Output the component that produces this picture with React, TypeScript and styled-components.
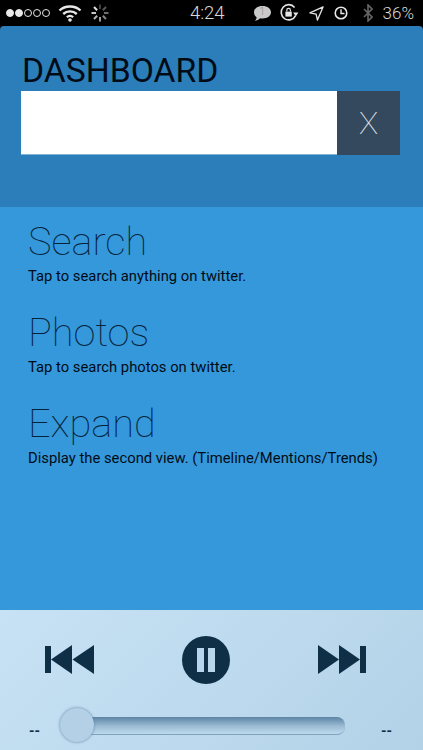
import React from 'react';
import styled, {createGlobalStyle} from 'styled-components';

const GlobalStyle = createGlobalStyle`
    html, body {
        margin: 0;
        padding: 0;
        background: #000;
    }

    * {
        box-sizing: border-box;
    }
`

const sections = [
    {title: 'Search', text: 'Tap to search anything on twitter.'},
    {title: 'Photos', text: 'Tap to search photos on twitter.'},
    {title: 'Expand', text: 'Display the second view. (Timeline/Mentions/Trends)'},
];

const Wifi = () => (
    <svg width="24" height="18" viewBox="0 0 24 18">
        <path d="M1.5 6.5C7 1.2 17 1.2 22.5 6.5" fill="none" stroke="#e8e8e8" strokeWidth="2.4"/>
        <path d="M5.2 10C9 6.5 15 6.5 18.8 10" fill="none" stroke="#e8e8e8" strokeWidth="2.4"/>
        <path d="M8.8 13.2C10.6 11.7 13.4 11.7 15.2 13.2" fill="none" stroke="#e8e8e8" strokeWidth="2.2"/>
        <circle cx="12" cy="16" r="1.8" fill="#e8e8e8"/>
    </svg>
);

const Spinner = () => (
    <svg width="20" height="20" viewBox="0 0 20 20">
        {[0, 45, 90, 135, 180, 225, 270, 315].map((angle, i) => (
            <line key={angle} x1="10" y1="1.5" x2="10" y2="6" stroke="#fff" strokeWidth="2"
                  opacity={0.25 + i * 0.09} transform={`rotate(${angle} 10 10)`}/>
        ))}
    </svg>
);

const Chat = () => (
    <svg width="19" height="17" viewBox="0 0 19 17">
        <path d="M9.5 1C14.5 1 18 3.6 18 7.2S14.5 13.4 9.5 13.4C8.6 13.4 7.8 13.3 7 13.2C5.8 14.6 3.9 15.6 1.8 15.8C3 14.7 3.6 13.5 3.6 12.2C1.9 11.1 1 9.3 1 7.2C1 3.6 4.5 1 9.5 1Z" fill="#c9c9c9"/>
    </svg>
);

const RotationLock = () => (
    <svg width="20" height="20" viewBox="0 0 20 20">
        <path d="M16.6 12.6A7.6 7.6 0 1 1 15.6 4.4" fill="none" stroke="#e4e4e4" strokeWidth="1.6"/>
        <path d="M14.2 9.6L19.4 9.6L16.8 13.4Z" fill="#e4e4e4"/>
        <rect x="6.4" y="8.6" width="6.4" height="5" fill="#e4e4e4"/>
        <path d="M7.8 8.6V7.2A1.8 1.8 0 0 1 11.4 7.2V8.6" fill="none" stroke="#e4e4e4" strokeWidth="1.2"/>
    </svg>
);

const Location = () => (
    <svg width="15" height="15" viewBox="0 0 16 16">
        <path d="M15 1L1 7.4L7.6 8.6L9 15Z" fill="none" stroke="#e4e4e4" strokeWidth="1.4" strokeLinejoin="round"/>
    </svg>
);

const Clock = () => (
    <svg width="14" height="14" viewBox="0 0 16 16">
        <circle cx="8" cy="8" r="6.6" fill="none" stroke="#e8e8e8" strokeWidth="1.8"/>
        <path d="M8 3.8V8.6H12" fill="none" stroke="#e8e8e8" strokeWidth="1.6"/>
    </svg>
);

const Bluetooth = () => (
    <svg width="10" height="18" viewBox="0 0 10 18">
        <path d="M1 5L9 13L5 17V1L9 5L1 13" fill="none" stroke="#666" strokeWidth="1.6"/>
    </svg>
);

const PrevIcon = () => (
    <svg width="50" height="30" viewBox="0 0 50 30">
        <rect x="0" y="1" width="6" height="27" fill="#0f2f47"/>
        <path d="M27 0V29L6 14.5Z" fill="#0f2f47"/>
        <path d="M49 0V29L27.5 14.5Z" fill="#0f2f47"/>
    </svg>
);

const NextIcon = () => (
    <svg width="50" height="30" viewBox="0 0 50 30">
        <path d="M1 0V29L22 14.5Z" fill="#0f2f47"/>
        <path d="M22 0V29L43 14.5Z" fill="#0f2f47"/>
        <rect x="43" y="1" width="6" height="27" fill="#0f2f47"/>
    </svg>
);

const App = () => {
    return (
        <Screen>
            <GlobalStyle/>
            <StatusBar>
                <StatusGroup $gap={8}>
                    <Signal>
                        <Dot $filled/>
                        <Dot $filled/>
                        <Dot/>
                        <Dot/>
                        <Dot/>
                    </Signal>
                    <Wifi/>
                    <Spinner/>
                </StatusGroup>
                <Time>4:24</Time>
                <StatusGroup $gap={10}>
                    <ChatBadge>
                        <Chat/>
                        <ChatCount>1</ChatCount>
                    </ChatBadge>
                    <RotationLock/>
                    <Location/>
                    <Clock/>
                    <BluetoothSlot>
                        <Bluetooth/>
                    </BluetoothSlot>
                    <Battery>36%</Battery>
                </StatusGroup>
            </StatusBar>
            <Header>
                <Title>DASHBOARD</Title>
                <SearchRow>
                    <SearchInput/>
                    <ClearButton>X</ClearButton>
                </SearchRow>
            </Header>
            <Content>
                {sections.map(section => (
                    <Section key={section.title}>
                        <SectionTitle>{section.title}</SectionTitle>
                        <SectionText>{section.text}</SectionText>
                    </Section>
                ))}
            </Content>
            <Player>
                <Controls>
                    <PrevIcon/>
                    <PauseButton>
                        <PauseBar/>
                        <PauseBar/>
                    </PauseButton>
                    <NextIcon/>
                </Controls>
                <SliderRow>
                    <TimeLabel>--</TimeLabel>
                    <Track>
                        <Thumb/>
                    </Track>
                    <TimeLabel>--</TimeLabel>
                </SliderRow>
            </Player>
        </Screen>
    );
};

export default App;

const Screen = styled.div`
    width: 423px;
    height: 750px;
    display: flex;
    flex-direction: column;
    overflow: hidden;
    background: #000;
    font-family: Roboto, sans-serif;
`

const StatusBar = styled.div`
    height: 26px;
    flex: none;
    display: flex;
    align-items: center;
    justify-content: space-between;
    padding: 0 9px 0 6px;
    background: #000;
`

const StatusGroup = styled.div<{ $gap: number }>`
    display: flex;
    align-items: center;
    gap: ${props => props.$gap}px;
`

const Signal = styled.div`
    display: flex;
    gap: 1px;
`

const Dot = styled.span<{ $filled?: boolean }>`
    width: 8px;
    height: 8px;
    border-radius: 50%;
    border: 1px solid #e8e8e8;
    background: ${props => props.$filled ? '#e8e8e8' : 'transparent'};
`

const ChatBadge = styled.div`
    position: relative;
    display: flex;
    margin-right: -3px;
`

const ChatCount = styled.span`
    position: absolute;
    left: 7px;
    top: 1px;
    color: #8a8a8a;
    font-size: 10px;
    font-weight: 300;
    line-height: 12px;
`

const BluetoothSlot = styled.div`
    display: flex;
    margin-left: 5px;
`

const Time = styled.div`
    color: #d8d8d8;
    font-size: 18.5px;
    font-weight: 300;
    margin-left: 52px;
`

const Battery = styled.div`
    color: #d8d8d8;
    font-size: 17px;
    font-weight: 300;
`

const Header = styled.header`
    height: 181px;
    flex: none;
    padding: 27px 23px 0 21px;
    background: #2b7eb9;
    border-radius: 4px 4px 0 0;
`

const Title = styled.h1`
    margin: 0;
    padding-left: 1px;
    height: 38px;
    color: #010b16;
    font-size: 33.7px;
    font-weight: 400;
    line-height: 35px;
`

const SearchRow = styled.div`
    display: flex;
    height: 64px;
`

const SearchInput = styled.div`
    flex: 1;
    background: #fff;
    border-bottom: 1px solid #7fb6da;
`

const ClearButton = styled.div`
    width: 63px;
    display: flex;
    align-items: center;
    justify-content: center;
    background: #34495e;
    color: #e6ecf0;
    font-size: 32px;
    font-weight: 100;
`

const Content = styled.main`
    flex: 1;
    padding: 10px 28px 0;
    background: #3498db;
`

const Section = styled.section`
    height: 91px;
`

const SectionTitle = styled.h2`
    margin: 0;
    color: #04223a;
    font-size: 39.7px;
    font-weight: 100;
    line-height: 50px;
`

const SectionText = styled.p`
    margin: 0;
    color: #010b16;
    font-size: 14.8px;
    line-height: 18px;
`

const Player = styled.footer`
    height: 140px;
    flex: none;
    padding: 26px 28px 0 29px;
    background: linear-gradient(135deg, #c8e2f5 0%, #b3d2e7 100%);
`

const Controls = styled.div`
    display: flex;
    align-items: center;
    justify-content: space-between;
    padding: 0 28px 0 16px;
    height: 48px;
`

const PauseButton = styled.div`
    width: 48px;
    height: 48px;
    border-radius: 50%;
    display: flex;
    align-items: center;
    justify-content: center;
    gap: 4px;
    background: #0f2f47;
`

const PauseBar = styled.span`
    width: 7px;
    height: 24px;
    background: #b9d7ec;
`

const SliderRow = styled.div`
    display: flex;
    align-items: center;
    margin: 33px 2px 0 0;
`

const TimeLabel = styled.span`
    color: #0f2f47;
    font-size: 14px;
    font-weight: 700;
    line-height: 18px;
    width: 12px;
    position: relative;
    top: 5px;
`

const Track = styled.div`
    flex: 1;
    height: 18px;
    margin: 0 36px 0 22px;
    position: relative;
    border-radius: 0 8px 8px 0;
    border-bottom: 1px solid #7fa2bd;
    background: linear-gradient(180deg, #5c84a4 0%, #9dbdd5 55%, #bcd9ee 100%);
`

const Thumb = styled.div`
    position: absolute;
    left: -3px;
    top: -9px;
    width: 34px;
    height: 34px;
    border-radius: 50%;
    background: #b3d0e6;
    box-shadow: 0 0 3px #5c84a4;
`
